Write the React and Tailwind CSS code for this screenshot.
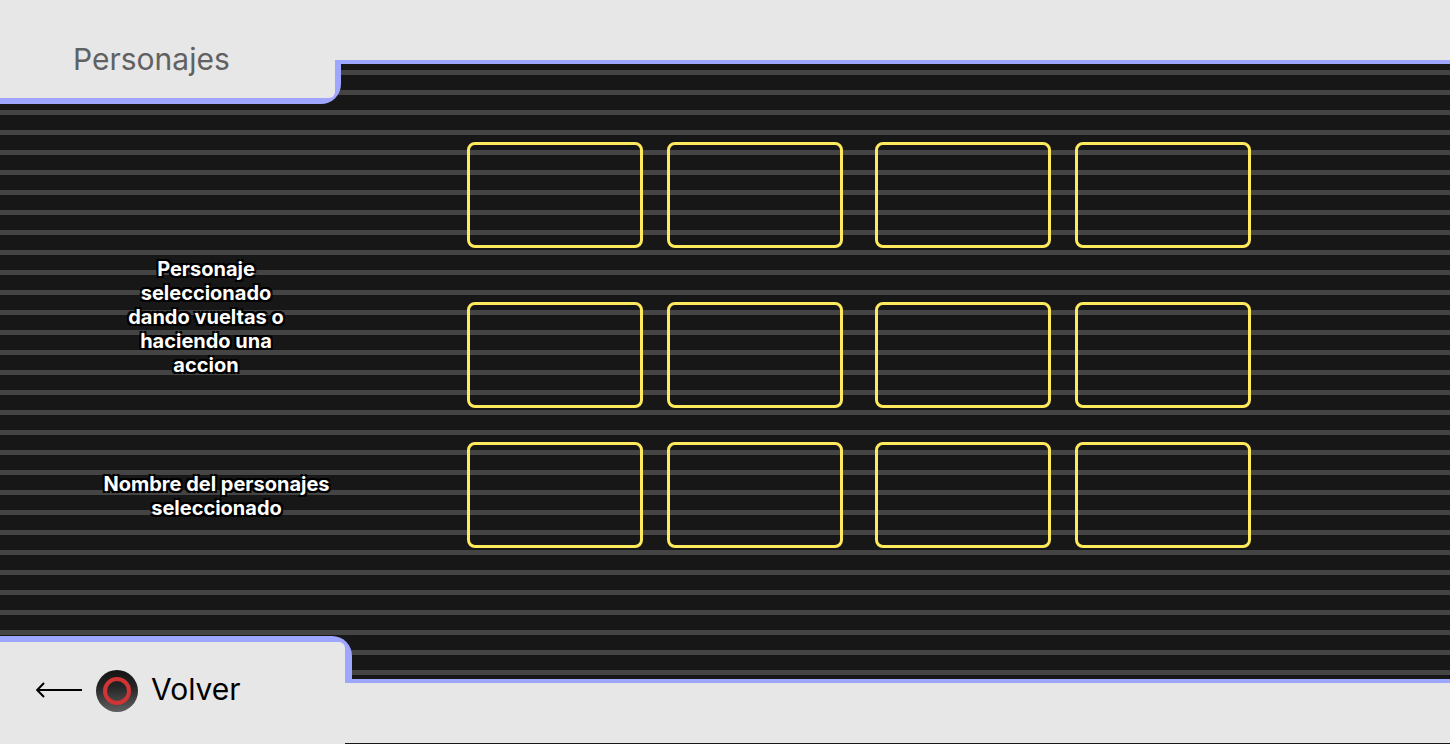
const rows = [
  { id: "a", spacing: "mt-0" },
  { id: "b", spacing: "mt-[54px]" },
  { id: "c", spacing: "mt-[34px]" },
];

const outlined =
  "text-center text-xl leading-6 font-bold text-white [text-shadow:-2px_-2px_0_#000,2px_-2px_0_#000,-2px_2px_0_#000,2px_2px_0_#000]";

function Slot({ label }) {
  return (
    <button
      type="button"
      aria-label={label}
      className="h-[106px] flex-1 rounded-lg border-3 border-[#ffe95c]"
    />
  );
}

function SlotRow({ index, spacing }) {
  const first = index * 4 + 1;
  return (
    <div className={`flex gap-8 ${spacing}`}>
      <div className="flex flex-1 gap-6">
        <Slot label={`Personaje ${first}`} />
        <Slot label={`Personaje ${first + 1}`} />
      </div>
      <div className="flex flex-1 gap-6">
        <Slot label={`Personaje ${first + 2}`} />
        <Slot label={`Personaje ${first + 3}`} />
      </div>
    </div>
  );
}

function Header() {
  return (
    <header className="grid grid-cols-[341px_1fr] grid-rows-[60px_44px]">
      <div className="col-span-2 col-start-1 row-start-1 bg-[#e7e7e7]" />
      <div className="col-start-1 row-start-2 flex rounded-br-[20px] bg-[#9fa6ff] pr-1.5 pb-1.5">
        <div className="flex-1 rounded-br-[6px] bg-[#e7e7e7]" />
      </div>
      <div className="col-start-2 row-start-2 h-1 bg-[#9fa6ff]" />
      <h1 className="col-start-1 row-span-2 row-start-1 self-center pt-3.5 pl-[73px] text-[30px] leading-9 text-[#616161]">
        Personajes
      </h1>
    </header>
  );
}

function Footer() {
  return (
    <footer className="grid grid-cols-[345px_7px_1fr] grid-rows-[47px_61px]">
      <div className="col-span-2 col-start-1 row-start-1 flex rounded-tr-[20px] bg-[#9fa6ff] pt-1.5 pr-[7px]">
        <div className="flex-1 rounded-tr-[6px] bg-[#e7e7e7]" />
      </div>
      <div className="col-start-3 row-start-1 h-1 self-end bg-[#9fa6ff]" />
      <div className="col-start-1 row-start-2 bg-[#e7e7e7]" />
      <div className="col-span-2 col-start-2 row-start-2 mb-px bg-[#e7e7e7]" />
      <button
        type="button"
        className="col-start-1 row-span-2 row-start-1 flex items-center self-center justify-self-start pt-0.5 pl-9 text-[30px] leading-9 text-black"
      >
        <svg className="mb-0.5" width="46" height="16" viewBox="0 0 46 16" fill="none" stroke="#000" strokeWidth="2" aria-hidden="true">
          <path d="M46 8H1M8 1L1.2 8L8 15" />
        </svg>
        <svg className="ml-3.5" width="42" height="42" viewBox="0 0 42 42" aria-hidden="true">
          <defs>
            <linearGradient id="pad" x1="0" y1="0" x2="0" y2="1">
              <stop offset="0" stopColor="#141414" />
              <stop offset="0.4" stopColor="#252526" />
              <stop offset="1" stopColor="#5f5f61" />
            </linearGradient>
          </defs>
          <circle cx="21" cy="21" r="21" fill="url(#pad)" />
          <circle cx="21" cy="21" r="12" fill="none" stroke="#d03434" strokeWidth="4" />
        </svg>
        <span className="mb-1 ml-[13px]">Volver</span>
      </button>
    </footer>
  );
}

export default function App() {
  return (
    <div className="flex min-h-screen flex-col bg-[repeating-linear-gradient(to_bottom,#171717_0px,#171717_10px,#444444_10px,#444444_15px,#171717_15px,#171717_20px)] font-['Inter',sans-serif]">
      <Header />
      <main className="grid flex-1 grid-cols-[467px_1fr]">
        <section className="pt-[153px]">
          <p className={`ml-[124px] w-[164px] ${outlined}`}>
            Personaje seleccionado dando vueltas o haciendo una accion
          </p>
          <h2 className={`mt-[95px] ml-[100px] w-[233px] ${outlined}`}>
            Nombre del personajes seleccionado
          </h2>
        </section>
        <section className="pt-[38px] pr-[199px]">
          {rows.map((row, index) => (
            <SlotRow key={row.id} index={index} spacing={row.spacing} />
          ))}
        </section>
      </main>
      <Footer />
    </div>
  );
}
